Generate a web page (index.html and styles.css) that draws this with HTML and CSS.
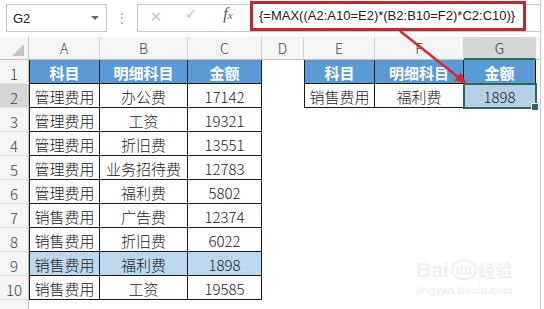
FILE: index.html
```html
<!doctype html>
<html lang="zh-CN">
<head>
	<meta charset="UTF-8" />
	<title>MAX 多条件查询</title>
<link rel="stylesheet" href="styles.css">
</head>
<body>
	<section class="app">
		<!-- 编辑栏 -->
		<div class="formula-bar">
			<div class="name-box">
				<span>G2</span>
				<i class="caret"></i>
			</div>
			<div class="dots">⋮</div>
			<div class="fx-box">
				<span class="btn cancel">✕</span>
				<span class="btn enter">✓</span>
				<span class="btn fx"><i>f</i><small>x</small></span>
				<div class="formula">{=MAX((A2:A10=E2)*(B2:B10=F2)*C2:C10)}</div>
			</div>
		</div>

		<!-- 表格 -->
		<div class="sheet">
			<div class="corner"><svg width="12" height="12" viewBox="0 0 12 12"><polygon points="12,0 12,12 0,12" fill="#c4c4c4"/></svg></div>
			<div class="col-head">A</div>
			<div class="col-head">B</div>
			<div class="col-head">C</div>
			<div class="col-head">D</div>
			<div class="col-head">E</div>
			<div class="col-head">F</div>
			<div class="col-head sel">G</div>
			<div class="col-head end"></div>

			<div class="row-head">1</div>
			<div class="cell th first">科目</div>
			<div class="cell th">明细科目</div>
			<div class="cell th">金额</div>
			<div class="cell"></div>
			<div class="cell th first">科目</div>
			<div class="cell th">明细科目</div>
			<div class="cell th">金额</div>

			<div class="row-head sel">2</div>
			<div class="cell td first">管理费用</div>
			<div class="cell td">办公费</div>
			<div class="cell td">17142</div>
			<div class="cell"></div>
			<div class="cell td first">销售费用</div>
			<div class="cell td">福利费</div>
			<div class="cell td active">1898</div>

			<div class="row-head">3</div>
			<div class="cell td first">管理费用</div>
			<div class="cell td">工资</div>
			<div class="cell td">19321</div>

			<div class="row-head">4</div>
			<div class="cell td first">管理费用</div>
			<div class="cell td">折旧费</div>
			<div class="cell td">13551</div>

			<div class="row-head">5</div>
			<div class="cell td first">管理费用</div>
			<div class="cell td">业务招待费</div>
			<div class="cell td">12783</div>

			<div class="row-head">6</div>
			<div class="cell td first">管理费用</div>
			<div class="cell td">福利费</div>
			<div class="cell td">5802</div>

			<div class="row-head">7</div>
			<div class="cell td first">销售费用</div>
			<div class="cell td">广告费</div>
			<div class="cell td">12374</div>

			<div class="row-head">8</div>
			<div class="cell td first">销售费用</div>
			<div class="cell td">折旧费</div>
			<div class="cell td">6022</div>

			<div class="row-head">9</div>
			<div class="cell td first hl">销售费用</div>
			<div class="cell td hl">福利费</div>
			<div class="cell td hl">1898</div>

			<div class="row-head">10</div>
			<div class="cell td first">销售费用</div>
			<div class="cell td">工资</div>
			<div class="cell td">19585</div>

			<div class="row-head"></div>
		</div>

		<!-- 标注箭头 -->
		<svg class="arrow" width="544" height="309" viewBox="0 0 544 309">
			<line x1="400" y1="31" x2="458" y2="77" stroke="#d9262c" stroke-width="2.5"/>
			<polygon points="467,84 454.5,80.5 460.7,72.6" fill="#d9262c"/>
		</svg>

		<!-- 水印 -->
		<div class="watermark">
			<div class="logo"><span>Bai</span><b>du</b><span>经验</span></div>
			<div class="site">jingyan.baidu.com</div>
		</div>
	</section>
</body>
</html>
```

FILE: styles.css
```css
*{
	margin: 0;
	padding: 0;
	box-sizing: border-box;
}
body{
	background: #fff;
	width: 544px;
	height: 309px;
	overflow: hidden;
	font-family: "Noto Sans CJK SC", "Liberation Sans", sans-serif;
}
.app{
	position: relative;
	width: 541px;
	height: 309px;
	border-right: 1px solid #c8c8c8;
	overflow: hidden;
}

/* 编辑栏 */
.formula-bar{
	display: flex;
	height: 37px;
	padding: 4px 0 0 6px;
}
.name-box{
	display: flex;
	align-items: center;
	justify-content: space-between;
	width: 101px;
	height: 28px;
	padding: 0 6px;
	border: 1px solid #c6c6c6;
	font: 13px "Liberation Sans", sans-serif;
	color: #222;
}
.caret{
	width: 0;
	height: 0;
	border-left: 4px solid transparent;
	border-right: 4px solid transparent;
	border-top: 4px solid #666;
	margin-right: 1px;
}
.dots{
	width: 30px;
	text-align: center;
	color: #a8a8a8;
	font-size: 14px;
	line-height: 26px;
}
.fx-box{
	flex: 1;
	display: flex;
	align-items: flex-start;
	height: 28px;
	border: 1px solid #c6c6c6;
	border-right: none;
}
.btn{
	height: 26px;
	line-height: 26px;
	text-align: center;
	color: #c8c8c8;
	font: 15px "DejaVu Sans", sans-serif;
}
.cancel{
	width: 36px;
	line-height: 25px;
}
.enter{
	width: 34px;
}
.fx{
	width: 40px;
	color: #555;
	font-family: "Liberation Serif", serif;
	font-style: italic;
}
.fx i{
	font-size: 16px;
}
.fx small{
	font-size: 11px;
}
.formula{
	width: 276px;
	height: 30px;
	margin: -4px 0 0 2px;
	padding-left: 6px;
	border: 3px solid #c0282e;
	font: 13px/24px "Liberation Sans", sans-serif;
	color: #222;
	background: #fff;
}

/* 表格 */
.sheet{
	display: grid;
	grid-template-columns: 29px 71px 88px 74px 42px 71px 89px 72px 4px;
	grid-template-rows: 23px repeat(10, 24px) 12px;
}
.corner{
	display: flex;
	align-items: flex-end;
	justify-content: flex-end;
	padding: 0 4px 3px 0;
	background: #f5f5f5;
	border-right: 1px solid #c8c8c8;
	border-bottom: 1px solid #bfbfbf;
}
.col-head{
	display: flex;
	align-items: center;
	justify-content: center;
	background: #f5f5f5;
	border-right: 1px solid #d4d4d4;
	border-bottom: 1px solid #bfbfbf;
	font-size: 14px;
	font-weight: 300;
	color: #444;
}
.col-head.sel{
	background: #d6d6d6;
	border-bottom: 2px solid #2b6b55;
	color: #333;
}
.col-head.end{
	border-right: none;
}
.row-head{
	grid-column: 1;
	display: flex;
	align-items: center;
	justify-content: center;
	padding-top: 3px;
	background: #f5f5f5;
	border-right: 1px solid #bfbfbf;
	border-bottom: 1px solid #e1e1e1;
	font-size: 15px;
	font-weight: 300;
	color: #444;
}
.row-head.sel{
	background: #d6d6d6;
}
.cell{
	display: flex;
	align-items: center;
	justify-content: center;
	padding-top: 2px;
	font-size: 15px;
	font-weight: 300;
	color: #1a1a1a;
	white-space: nowrap;
}
.th{
	background: #5b9bd5;
	color: #fff;
	font-weight: bold;
	border-right: 1px solid #1a1a1a;
	border-bottom: 1px solid #1a1a1a;
}
.td{
	background: #fff;
	border-right: 1px solid #1a1a1a;
	border-bottom: 1px solid #1a1a1a;
}
.first{
	border-left: 1px solid #1a1a1a;
}
.hl{
	background: #bdd7ee;
}
.active{
	position: relative;
	background: #b8d0e6;
	outline: 2px solid #2b6b55;
	outline-offset: -1px;
}
.active::after{
	content: "";
	position: absolute;
	right: -4px;
	bottom: -4px;
	width: 6px;
	height: 6px;
	background: #2b6b55;
	border: 1px solid #fff;
}

/* 箭头、水印 */
.arrow{
	position: absolute;
	left: 0;
	top: 0;
	pointer-events: none;
}
.watermark{
	position: absolute;
	left: 416px;
	top: 258px;
	color: #f1f1f1;
	pointer-events: none;
}
.logo{
	display: flex;
	align-items: center;
	font: bold 21px "Liberation Sans", sans-serif;
	line-height: 24px;
}
.logo b{
	margin: 0 2px;
	padding: 0 3px;
	border: 2px solid #f1f1f1;
	border-radius: 10px;
	font-size: 13px;
	line-height: 16px;
}
.logo span + b + span{
	font-family: "Noto Sans CJK SC", sans-serif;
	font-size: 17px;
}
.site{
	font: bold 11px "Liberation Sans", sans-serif;
	margin-top: 2px;
}
```
